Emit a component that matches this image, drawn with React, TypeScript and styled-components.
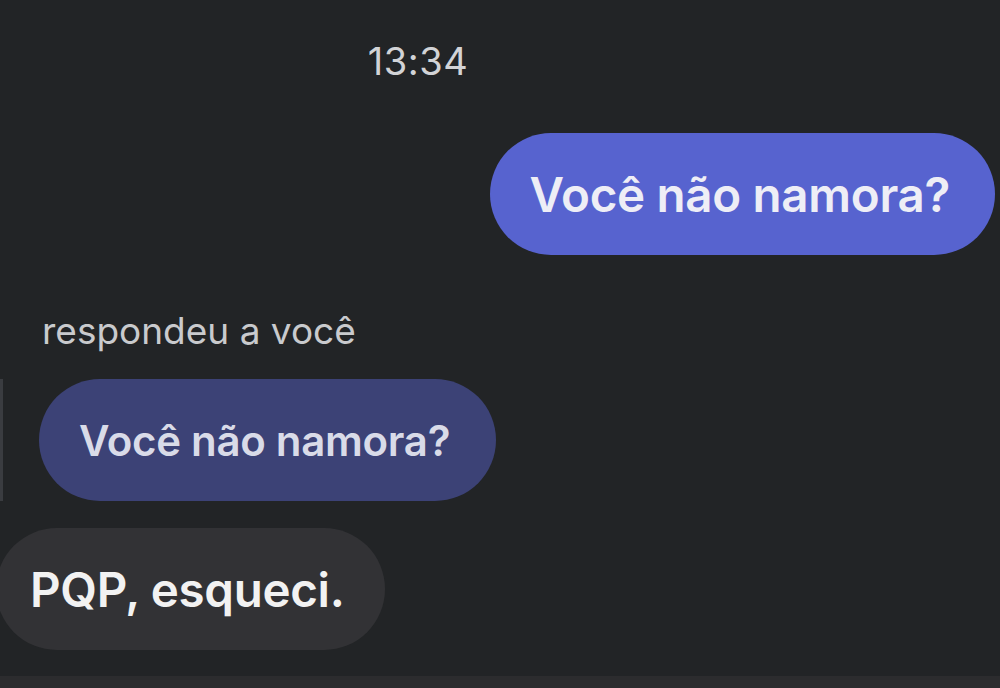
import React from "react";
import styled, { createGlobalStyle } from "styled-components";

const Global = createGlobalStyle`
  html, body {
    margin: 0;
    padding: 0;
    background: #222426;
  }
  body {
    font-family: "Inter", "Liberation Sans", Arial, sans-serif;
    -webkit-font-smoothing: antialiased;
  }
`;

const Screen = styled.div`
  width: 1000px;
  height: 688px;
  overflow: hidden;
  background: #222426;
  display: flex;
  flex-direction: column;
`;

const Timestamp = styled.div`
  margin-top: 38px;
  padding-right: 164px;
  text-align: center;
  font-size: 38px;
  line-height: 46px;
  font-weight: 400;
  color: #d2d3d6;
  letter-spacing: 0.5px;
`;

const Row = styled.div<{ $align: "start" | "end"; $gap: number }>`
  display: flex;
  justify-content: ${(p) => (p.$align === "end" ? "flex-end" : "flex-start")};
  align-items: stretch;
  margin-top: ${(p) => p.$gap}px;
`;

type Tone = "sent" | "quoted" | "received";

const tones: Record<Tone, { bg: string; fg: string; size: number }> = {
  sent: { bg: "#5763cf", fg: "#eeeef6", size: 47.5 },
  quoted: { bg: "#3c4276", fg: "#d9dbe8", size: 42 },
  received: { bg: "#323235", fg: "#f2f2f2", size: 47.5 },
};

const Bubble = styled.div<{ $tone: Tone; $padL: number; $padR: number }>`
  height: 122px;
  box-sizing: border-box;
  display: flex;
  align-items: center;
  padding: 0 ${(p) => p.$padR}px 0 ${(p) => p.$padL}px;
  border-radius: 61px;
  background: ${(p) => tones[p.$tone].bg};
  color: ${(p) => tones[p.$tone].fg};
  font-size: ${(p) => tones[p.$tone].size}px;
  font-weight: 600;
  letter-spacing: -0.3px;
  white-space: nowrap;
`;

const SentRow = styled(Row)`
  padding-right: 5px;
`;

const ReplyLabel = styled.div`
  margin-top: 53px;
  padding-left: 42px;
  font-size: 37px;
  line-height: 46px;
  color: #c9cacd;
  font-weight: 400;
`;

const ReplyBar = styled.div`
  width: 3px;
  background: #3a3c40;
  margin-right: 36px;
`;

const ReceivedBubble = styled(Bubble)`
  margin-left: -4px;
`;

const Spacer = styled.div`
  flex: 1;
`;

const BottomStrip = styled.div`
  height: 12px;
  background: #2c2c2e;
`;

export default function App() {
  return (
    <>
      <Global />
      <Screen>
        <Timestamp>13:34</Timestamp>
        <SentRow $align="end" $gap={49}>
          <Bubble $tone="sent" $padL={40} $padR={45}>
            Você não namora?
          </Bubble>
        </SentRow>
        <ReplyLabel>respondeu a você</ReplyLabel>
        <Row $align="start" $gap={25}>
          <ReplyBar />
          <Bubble $tone="quoted" $padL={40} $padR={46}>
            Você não namora?
          </Bubble>
        </Row>
        <Row $align="start" $gap={27}>
          <ReceivedBubble $tone="received" $padL={34} $padR={40}>
            PQP, esqueci.
          </ReceivedBubble>
        </Row>
        <Spacer />
        <BottomStrip />
      </Screen>
    </>
  );
}
